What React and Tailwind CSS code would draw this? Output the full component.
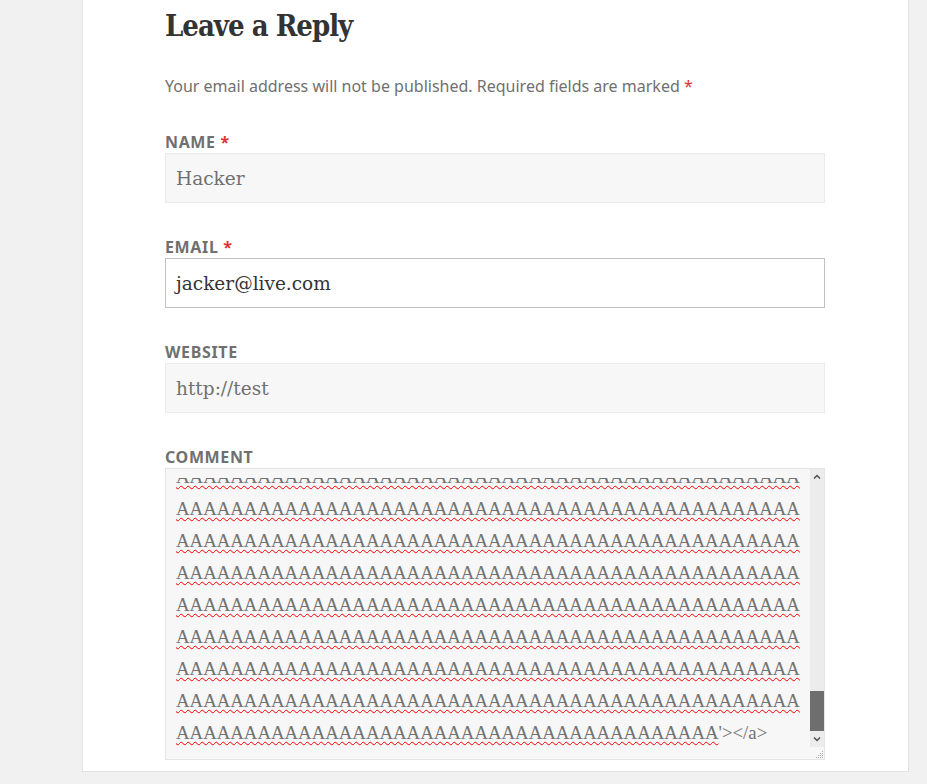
import React from "react";

const serif = "font-['DejaVu_Serif',serif]";

const fields = [
  { label: "Name", value: "Hacker", required: true },
  { label: "Email", value: "jacker@live.com", required: true, focused: true },
  { label: "Website", value: "http://test", required: false },
];

const fullRow = "A".repeat(46);
const lastRow = "A".repeat(40);

export default function App() {
  return (
    <div className="min-h-[784px] bg-[#f1f1f1] font-['Noto_Sans',sans-serif]">
      <div className="ml-[82px] w-[827px] bg-white border-x border-b border-[#e3e3e3] pl-[82px] pr-[83px] pt-[6px] pb-[11px]">
        {/* ---------- Title ---------- */}
        <h3 className="font-['DejaVu_Serif_Condensed','DejaVu_Serif',serif] font-bold text-[29px] leading-[40px] tracking-[-1px] text-[#333] [font-stretch:condensed]">
          Leave a Reply
        </h3>

        <p className="mt-[28px] text-[16px] leading-[24px] text-[#707070]">
          Your email address will not be published. Required fields are marked{" "}
          <span className="text-[#d33]">*</span>
        </p>

        {/* ---------- Inputs ---------- */}
        <div className="mt-[33px]">
          {fields.map((f) => (
            <div key={f.label} className="mb-[33px]">
              <label className="block text-[16px] leading-[22px] font-bold uppercase tracking-[0.04em] text-[#707070]">
                {f.label} {f.required && <span className="text-[#d33]">*</span>}
              </label>
              <div
                className={`h-[50px] flex items-center px-[10px] pt-[2px] border ${serif} text-[18.5px] ${
                  f.focused
                    ? "bg-white border-[#c1c1c1] text-[#333]"
                    : "bg-[#f7f7f7] border-[#eaeaea] text-[#707070]"
                }`}
              >
                {f.value}
              </div>
            </div>
          ))}

          {/* ---------- Comment ---------- */}
          <div>
            <label className="block text-[16px] leading-[22px] font-bold uppercase tracking-[0.04em] text-[#707070]">
              Comment
            </label>
            <div className="h-[292px] flex bg-[#f7f7f7] border border-[#e5e5e5]">
              <div className="flex-1 pt-[9px] pl-[10px]">
                <div className="h-[272px] overflow-hidden font-['Liberation_Serif',serif] text-[18.8px] leading-[32px] text-[#727272] whitespace-nowrap">
                  <div className="-mt-[17px]">
                    {Array.from({ length: 8 }).map((_, i) => (
                      <div key={i}>
                        <span className="underline decoration-wavy decoration-[#e00] decoration-1 underline-offset-[2px]">
                          {fullRow}
                        </span>
                      </div>
                    ))}
                    <div>
                      <span className="underline decoration-wavy decoration-[#e00] decoration-1 underline-offset-[2px]">
                        {lastRow}
                      </span>
                      {"'></a>"}
                    </div>
                  </div>
                </div>
              </div>

              {/* ---------- Scrollbar ---------- */}
              <div className="w-[14px] flex flex-col">
                <div className="flex-1 flex flex-col bg-[#ececec]">
                  <div className="h-[14px] flex items-center justify-center">
                    <svg width="8" height="5" viewBox="0 0 8 5">
                      <path d="M1 4.5 L4 1.5 L7 4.5" fill="none" stroke="#505050" strokeWidth="1.5" />
                    </svg>
                  </div>
                  <div className="flex-1 flex flex-col justify-end">
                    <div className="h-[40px] bg-[#6e6e6e]" />
                  </div>
                  <div className="h-[16px] flex items-center justify-center">
                    <svg width="8" height="5" viewBox="0 0 8 5">
                      <path d="M1 0.5 L4 3.5 L7 0.5" fill="none" stroke="#505050" strokeWidth="1.5" />
                    </svg>
                  </div>
                </div>
                <div className="h-[12px] bg-[#f7f7f7] flex items-end justify-end">
                  <svg width="10" height="10" viewBox="0 0 10 10">
                    <g fill="#aaa">
                      <rect x="8" y="2" width="1" height="1" />
                      <rect x="6" y="4" width="1" height="1" />
                      <rect x="8" y="4" width="1" height="1" />
                      <rect x="4" y="6" width="1" height="1" />
                      <rect x="6" y="6" width="1" height="1" />
                      <rect x="8" y="6" width="1" height="1" />
                      <rect x="2" y="8" width="1" height="1" />
                      <rect x="4" y="8" width="1" height="1" />
                      <rect x="6" y="8" width="1" height="1" />
                      <rect x="8" y="8" width="1" height="1" />
                    </g>
                  </svg>
                </div>
              </div>
            </div>
          </div>
        </div>
      </div>
    </div>
  );
}
